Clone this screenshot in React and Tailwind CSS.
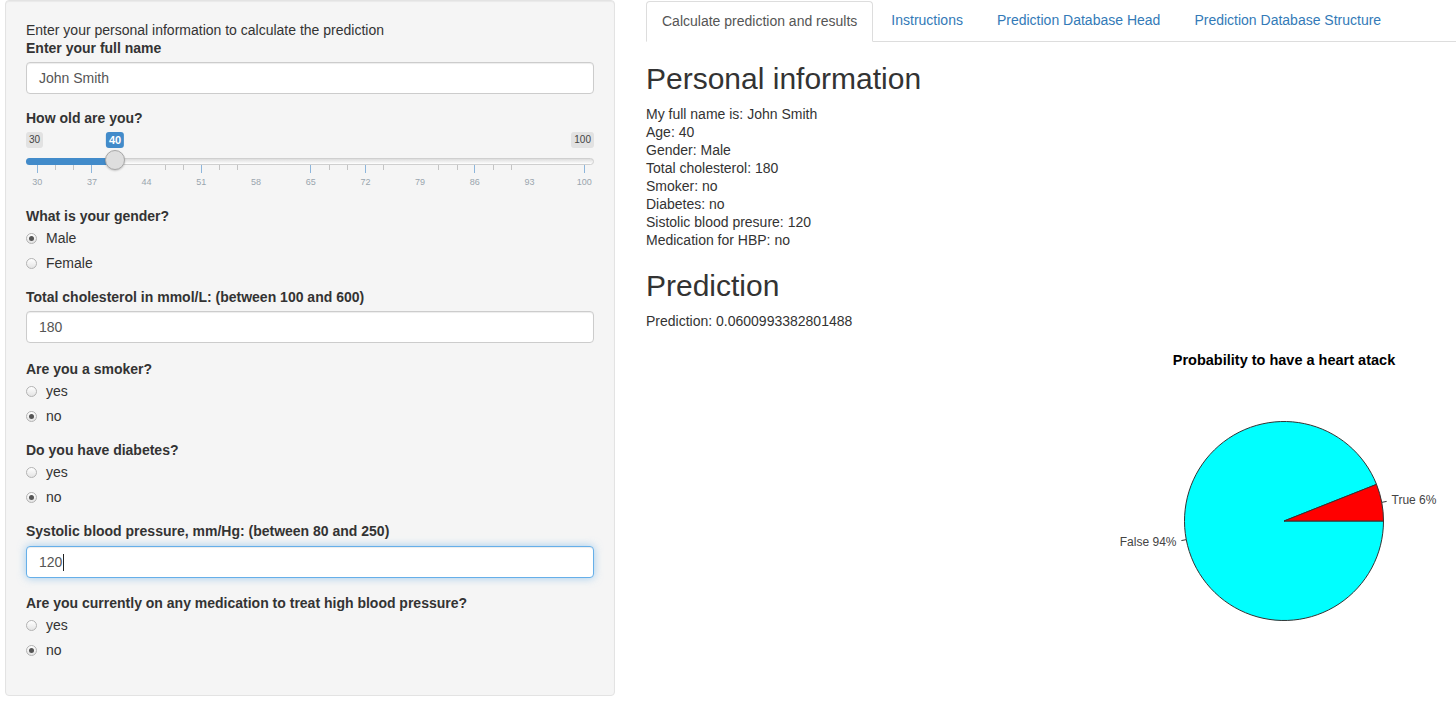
import React from "react";

const FONT = { fontFamily: '"Liberation Sans", Arial, Helvetica, sans-serif' };

function Label({ children }) {
  return <div className="text-[14px] leading-[18px] font-bold text-[#333]">{children}</div>;
}

function Radio({ label, checked, className = "" }) {
  return (
    <div className={"flex items-center h-[18px] gap-[9px] " + className}>
      <span className="w-[11px] h-[11px] rounded-full border border-[#b3b3b3] bg-[linear-gradient(#ffffff,#e4e4e4)] flex items-center justify-center">
        {checked && <span className="w-[5px] h-[5px] rounded-full bg-[#555]" />}
      </span>
      <span className="text-[14px] leading-[18px] text-[#333]">{label}</span>
    </div>
  );
}

function TextInput({ value, focused }) {
  return (
    <div
      className={
        "h-[32px] rounded-[4px] bg-white border flex items-center px-[12px] text-[14px] text-[#555] " +
        (focused
          ? "border-[#66afe9] shadow-[inset_0_1px_1px_rgba(0,0,0,0.075),0_0_8px_rgba(102,175,233,0.6)]"
          : "border-[#ccc] shadow-[inset_0_1px_1px_rgba(0,0,0,0.075)]")
      }
    >
      <span>{value}</span>
      {focused && <span className="w-px h-[17px] bg-[#222] ml-px" />}
    </div>
  );
}

function RadioGroup({ title, options, selected }) {
  return (
    <div className="mb-[16px]">
      <Label>{title}</Label>
      <Radio label={options[0]} checked={selected === 0} className="mt-[4px]" />
      <Radio label={options[1]} checked={selected === 1} className="mt-[7px]" />
    </div>
  );
}

const majors = [30, 37, 44, 51, 58, 65, 72, 79, 86, 93, 100];
const majorX = (i) => 10.7 + i * 54.7;
const visibleMajor = [0, 1, 3, 5, 6, 8, 10];
const minorX = [55, 73, 165, 183, 219, 237, 329, 347, 383, 438, 457, 493, 511];

function Slider() {
  return (
    <div className="relative h-[60px] mt-[5px]">
      <div className="absolute left-0 top-0 h-[16px] px-[3px] rounded-[3px] bg-[#e2e2e2] text-[10px] leading-[16px] text-[#444]">30</div>
      <div className="absolute right-0 top-0 h-[16px] px-[3px] rounded-[3px] bg-[#e2e2e2] text-[10px] leading-[16px] text-[#444]">100</div>
      <div className="absolute left-[89px] top-0 -translate-x-1/2 h-[16px] px-[3px] rounded-[3px] bg-[#428bca] text-[11px] font-bold leading-[16px] text-white">40</div>
      <div className="absolute left-0 right-0 top-[26px] h-[7px] rounded-full border border-[#cfcfcf] bg-[linear-gradient(to_bottom,#dddddd,#ffffff)]" />
      <div className="absolute left-0 top-[26px] w-[89px] h-[7px] rounded-l-full bg-[#428bca]" />
      {visibleMajor.map((i) => (
        <div key={"M" + i} className="absolute top-[33px] w-px h-[8px] bg-[#8db6dc]" style={{ left: majorX(i) }} />
      ))}
      {minorX.map((x) => (
        <div key={"m" + x} className="absolute top-[33px] w-px h-[5px] bg-[#c4c4c4]" style={{ left: x - 26 }} />
      ))}
      {majors.map((v, i) => (
        <div
          key={"l" + v}
          className="absolute top-[45px] -translate-x-1/2 text-[9px] leading-[10px] text-[#9aa5ae]"
          style={{ left: majorX(i) + 0.5 }}
        >
          {v}
        </div>
      ))}
      <div className="absolute left-[89px] top-[28px] -translate-x-1/2 -translate-y-1/2 w-[20px] h-[20px] rounded-full border border-[#a8a8a8] bg-[#dedede] shadow-[0_1px_2px_rgba(0,0,0,0.2)]" />
    </div>
  );
}

function Pie() {
  const cx = 200;
  const cy = 181;
  const r = 99.5;
  const a = 0.06 * 2 * Math.PI;
  const ex = cx + r * Math.cos(a);
  const ey = cy - r * Math.sin(a);
  const m1 = a / 2;
  const m2 = a + (2 * Math.PI - a) / 2;
  const p = (ang, k) => [cx + k * r * Math.cos(ang), cy - k * r * Math.sin(ang)];
  const [t1x, t1y] = p(m1, 1);
  const [t2x, t2y] = p(m1, 1.05);
  const [l1x, l1y] = p(m1, 1.1);
  const [f1x, f1y] = p(m2, 1);
  const [f2x, f2y] = p(m2, 1.05);
  const [g1x, g1y] = p(m2, 1.1);
  return (
    <svg width="372" height="320" className="block ml-[438px] mt-[10px]" style={FONT}>
      <text x={cx} y="25" textAnchor="middle" fontSize="14.5" fontWeight="bold" fill="#000">
        Probability to have a heart atack
      </text>
      <path d={`M${cx} ${cy} L${ex} ${ey} A${r} ${r} 0 1 0 ${cx + r} ${cy} Z`} fill="#00ffff" stroke="#333" strokeWidth="1" />
      <path d={`M${cx} ${cy} L${cx + r} ${cy} A${r} ${r} 0 0 0 ${ex} ${ey} Z`} fill="#ff0000" stroke="#333" strokeWidth="1" />
      <line x1={t1x} y1={t1y} x2={t2x} y2={t2y} stroke="#333" strokeWidth="1" />
      <line x1={f1x} y1={f1y} x2={f2x} y2={f2y} stroke="#333" strokeWidth="1" />
      <text x={l1x} y={l1y + 4} fontSize="12" fill="#444">True 6%</text>
      <text x={g1x} y={g1y + 4} fontSize="12" fill="#444" textAnchor="end">False 94%</text>
    </svg>
  );
}

export default function App() {
  const tabs = ["Instructions", "Prediction Database Head", "Prediction Database Structure"];
  const info = [
    "My full name is: John Smith",
    "Age: 40",
    "Gender: Male",
    "Total cholesterol: 180",
    "Smoker: no",
    "Diabetes: no",
    "Sistolic blood presure: 120",
    "Medication for HBP: no",
  ];
  return (
    <div className="flex w-[1456px] h-[712px] bg-white overflow-hidden text-[#333]" style={FONT}>
      <div className="pl-[5px] shrink-0">
        <div className="w-[610px] h-[696px] bg-[#f5f5f5] border border-[#e3e3e3] rounded-[4px] shadow-[inset_0_1px_1px_rgba(0,0,0,0.05)] px-[20px] pt-[20px]">
          <div className="text-[14px] leading-[18px] text-[#333]">Enter your personal information to calculate the prediction</div>
          <Label>Enter your full name</Label>
          <div className="mt-[5px] mb-[15px]">
            <TextInput value="John Smith" />
          </div>
          <Label>How old are you?</Label>
          <div className="mb-[15px]">
            <Slider />
          </div>
          <RadioGroup title="What is your gender?" options={["Male", "Female"]} selected={0} />
          <Label>Total cholesterol in mmol/L: (between 100 and 600)</Label>
          <div className="mt-[5px] mb-[17px]">
            <TextInput value="180" />
          </div>
          <RadioGroup title="Are you a smoker?" options={["yes", "no"]} selected={1} />
          <RadioGroup title="Do you have diabetes?" options={["yes", "no"]} selected={1} />
          <Label>Systolic blood pressure, mm/Hg: (between 80 and 250)</Label>
          <div className="mt-[6px] mb-[16px]">
            <TextInput value="120" focused />
          </div>
          <RadioGroup title="Are you currently on any medication to treat high blood pressure?" options={["yes", "no"]} selected={1} />
        </div>
      </div>
      <div className="ml-[31px] flex-1 min-w-0">
        <div className="flex mt-px border-b border-[#ddd] h-[41px]">
          <div className="h-[41px] px-[15px] border border-[#ddd] border-b-white bg-white rounded-t-[4px] text-[14px] leading-[39px] text-[#555] mr-[2px] -mb-px">
            Calculate prediction and results
          </div>
          {tabs.map((t) => (
            <div key={t} className="h-[41px] px-[16px] text-[14px] leading-[39px] text-[#337ab7] mr-[2px]">
              {t}
            </div>
          ))}
        </div>
        <h2 className="mt-[20px] mb-[10px] text-[30px] leading-[33px] font-normal text-[#333]">Personal information</h2>
        <div className="text-[14px] leading-[18px] text-[#333]">
          {info.map((l) => (
            <div key={l}>{l}</div>
          ))}
        </div>
        <h2 className="mt-[20px] mb-[10px] text-[30px] leading-[33px] font-normal text-[#333]">Prediction</h2>
        <div className="text-[14px] leading-[18px] text-[#333]">Prediction: 0.0600993382801488</div>
        <Pie />
      </div>
    </div>
  );
}
